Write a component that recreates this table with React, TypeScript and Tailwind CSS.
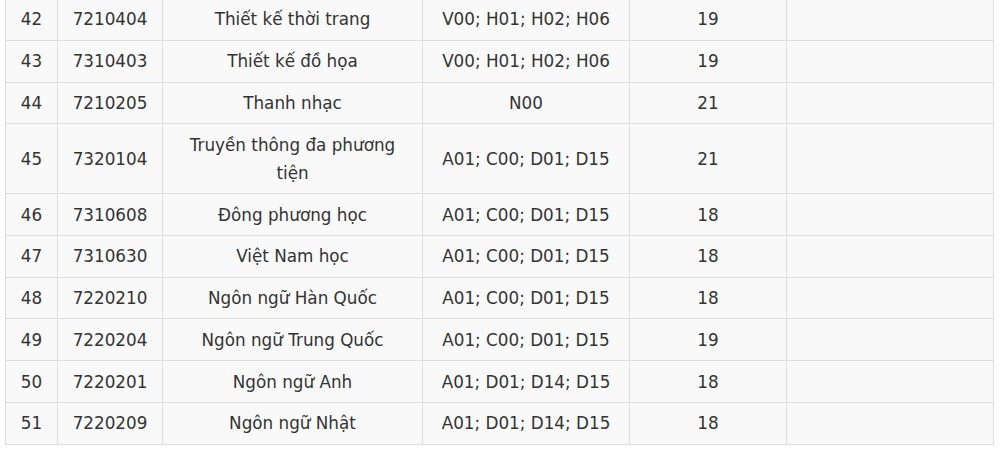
import React from 'react';

const rows: [string, string, string, string, string][] = [
  ['42', '7210404', 'Thiết kế thời trang', 'V00; H01; H02; H06', '19'],
  ['43', '7310403', 'Thiết kế đồ họa', 'V00; H01; H02; H06', '19'],
  ['44', '7210205', 'Thanh nhạc', 'N00', '21'],
  ['45', '7320104', 'Truyền thông đa phương tiện', 'A01; C00; D01; D15', '21'],
  ['46', '7310608', 'Đông phương học', 'A01; C00; D01; D15', '18'],
  ['47', '7310630', 'Việt Nam học', 'A01; C00; D01; D15', '18'],
  ['48', '7220210', 'Ngôn ngữ Hàn Quốc', 'A01; C00; D01; D15', '18'],
  ['49', '7220204', 'Ngôn ngữ Trung Quốc', 'A01; C00; D01; D15', '19'],
  ['50', '7220201', 'Ngôn ngữ Anh', 'A01; D01; D14; D15', '18'],
  ['51', '7220209', 'Ngôn ngữ Nhật', 'A01; D01; D14; D15', '18'],
];

const cell = 'border border-[#dedede] px-2 py-[6.4px] text-center align-middle';

export default function App() {
  return (
    <div className="w-[1000px] h-[449px] overflow-hidden bg-white pl-[5px]">
      <table
        className="-mt-[2px] border-collapse bg-[#f9f9f9] text-[#333] text-[16.8px] leading-[28px] table-fixed"
        style={{ fontFamily: '"DejaVu Sans", sans-serif' }}
      >
        <colgroup>
          <col className="w-[52px]" />
          <col className="w-[105px]" />
          <col className="w-[260px]" />
          <col className="w-[207px]" />
          <col className="w-[157px]" />
          <col className="w-[207px]" />
        </colgroup>
        <tbody>
          {rows.map((r) => (
            <tr key={r[0]}>
              <td className={cell}>{r[0]}</td>
              <td className={cell}>{r[1]}</td>
              <td className={`${cell} px-[22px]`}>{r[2]}</td>
              <td className={cell}>{r[3]}</td>
              <td className={cell}>{r[4]}</td>
              <td className={cell}></td>
            </tr>
          ))}
        </tbody>
      </table>
    </div>
  );
}
